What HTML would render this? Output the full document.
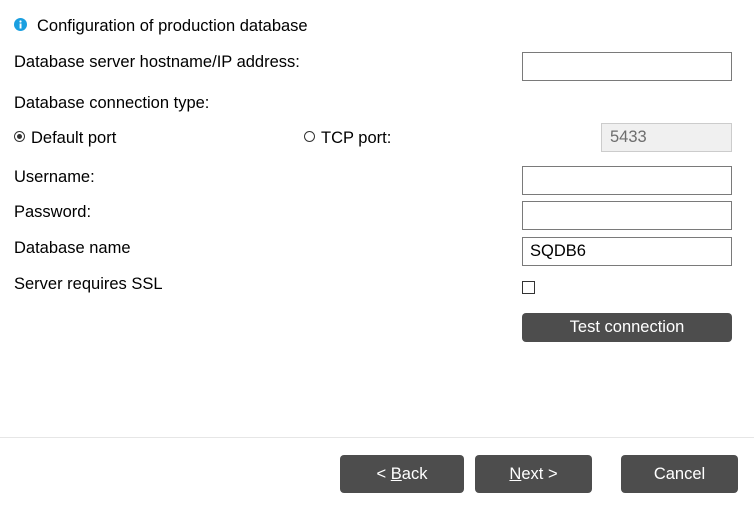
<!DOCTYPE html>
<html><head><style>
body{margin:0;width:754px;height:508px;background:#fff;font-family:"Liberation Sans",Arial,sans-serif;font-size:16.5px;color:#000;position:relative;overflow:hidden}
.a{position:absolute;white-space:nowrap;line-height:18px}
.in{position:absolute;box-sizing:border-box;border:1px solid #7a7a7a;background:#fff}
.btn{position:absolute;background:#4d4d4d;color:#fff;border-radius:4px;text-align:center;box-sizing:border-box}
.rad{position:absolute;width:11px;height:11px;border:1px solid #333;border-radius:50%;box-sizing:border-box}
</style></head><body>
<svg class="a" style="left:14px;top:18px" width="13" height="13" viewBox="0 0 13 13"><circle cx="6.5" cy="6.5" r="6.5" fill="#1a9fe0"/><rect x="5.6" y="5.5" width="1.9" height="5" fill="#fff"/><circle cx="6.5" cy="3.5" r="1.1" fill="#fff"/></svg>
<div class="a" style="left:37px;top:17px">Configuration of production database</div>
<div class="a" style="left:14px;top:53px">Database server hostname/IP address:</div>
<div class="in" style="left:522px;top:52px;width:210px;height:29px"></div>
<div class="a" style="left:14px;top:94px">Database connection type:</div>
<div class="rad" style="left:14px;top:131px"><div style="position:absolute;left:2px;top:2px;width:5px;height:5px;border-radius:50%;background:#333"></div></div>
<div class="a" style="left:31px;top:129px">Default port</div>
<div class="rad" style="left:304px;top:131px"></div>
<div class="a" style="left:321px;top:129px">TCP port:</div>
<div class="in" style="left:601px;top:123px;width:131px;height:29px;background:#f0f0f0;border-color:#ccc;color:#6d6d6d;padding:4px 0 0 8px">5433</div>
<div class="a" style="left:14px;top:168px">Username:</div>
<div class="in" style="left:522px;top:166px;width:210px;height:29px"></div>
<div class="a" style="left:14px;top:203px">Password:</div>
<div class="in" style="left:522px;top:201px;width:210px;height:29px"></div>
<div class="a" style="left:14px;top:239px">Database name</div>
<div class="in" style="left:522px;top:237px;width:210px;height:29px;padding:4px 0 0 7px">SQDB6</div>
<div class="a" style="left:14px;top:275px">Server requires SSL</div>
<div class="in" style="left:522px;top:281px;width:13px;height:13px;border-color:#333"></div>
<div class="btn" style="left:522px;top:313px;width:210px;height:29px;line-height:29px">Test connection</div>
<div style="position:absolute;left:0;top:437px;width:754px;height:1px;background:#e6e6e6"></div>
<div class="btn" style="left:340px;top:455px;width:124px;height:38px;line-height:38px">&lt; <u>B</u>ack</div>
<div class="btn" style="left:475px;top:455px;width:117px;height:38px;line-height:38px"><u>N</u>ext &gt;</div>
<div class="btn" style="left:621px;top:455px;width:117px;height:38px;line-height:38px">Cancel</div>
</body></html>
